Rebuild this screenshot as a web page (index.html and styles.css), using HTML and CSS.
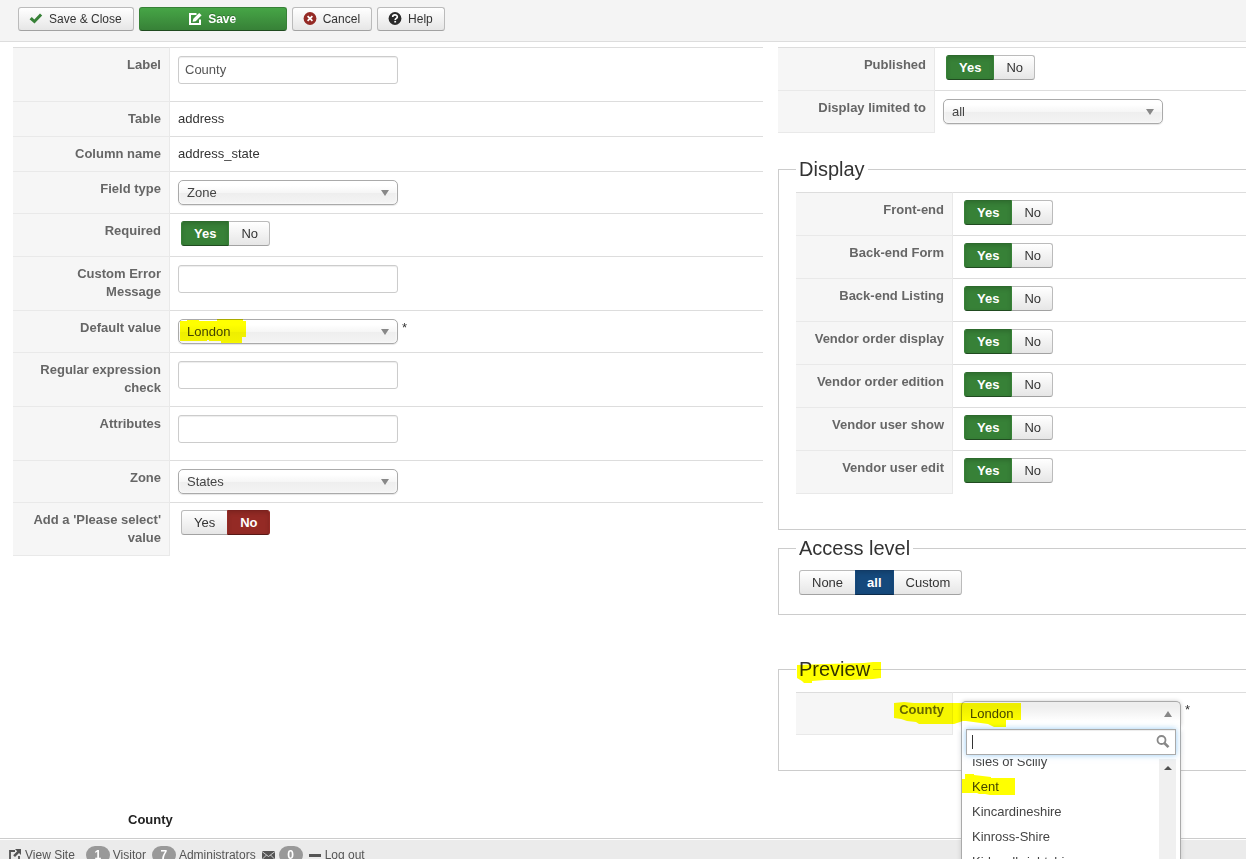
FILE: index.html
```html
<!DOCTYPE html>
<html lang="en">
<head>
<meta charset="utf-8">
<title>Field: County</title>
<link rel="stylesheet" href="styles.css">
</head>
<body>
<header class="toolbar">
  <button type="button" class="btn"><svg class="icon" viewBox="0 0 14 14" width="14" height="14"><path d="M.6 7.200 2.800 5 5.300 7.400 11 1.600 13.200 3.600 5.500 11.600z" fill="#378137"/></svg>Save &amp; Close</button>
  <button type="button" class="btn btn-save"><svg class="icon" viewBox="0 0 14 14" width="14" height="14"><path d="M8.500 2H2v10h10V7.500" fill="none" stroke="#fff" stroke-width="2"/><path d="M4.600 9.800 5.300 6.800 11.200 .9 13.600 3.300 7.700 9.200z" fill="#fff"/></svg>Save</button>
  <button type="button" class="btn"><svg class="icon" viewBox="0 0 14 14" width="14" height="14"><circle cx="7" cy="6.500" r="6.400" fill="#942a25"/><path d="M4.600 4.100l4.800 4.800M9.400 4.100l-4.800 4.800" stroke="#fff" stroke-width="1.700"/></svg>Cancel</button>
  <button type="button" class="btn"><svg class="icon" viewBox="0 0 14 14" width="14" height="14"><circle cx="7" cy="6.500" r="6.400" fill="#2b2b2b"/><path d="M4.700 5C4.700 2.200 9.300 2.200 9.300 4.900 9.300 6.500 7.200 6.200 7.200 8" fill="none" stroke="#fff" stroke-width="1.700"/><path d="M6.300 8.900h1.800v1.600H6.300z" fill="#fff"/></svg>Help</button>
</header>

<main class="columns">
  <section>
    <table class="form-table">
      <tr><th><label for="label">Label</label></th><td><input class="text" id="label" type="text" value="County"></td></tr>
      <tr><th>Table</th><td>address</td></tr>
      <tr><th>Column name</th><td>address_state</td></tr>
      <tr><th><label for="type">Field type</label></th><td><div class="pick"><select id="type"><option>Zone</option></select></div></td></tr>
      <tr><th id="t-req">Required</th><td class="switch"><div class="group" role="radiogroup" aria-labelledby="t-req"><label class="yes"><input type="radio" name="req" checked>Yes</label><label class="no"><input type="radio" name="req">No</label></div></td></tr>
      <tr><th><label for="err">Custom Error Message</label></th><td><input class="text" id="err" type="text"></td></tr>
      <tr><th><label for="def">Default value</label></th><td><div class="line"><div class="pick"><select id="def"><option>London</option></select><svg class="marker mark-default" viewBox="0 0 70 25" width="70" height="25"><path d="M2 2h7V1h12v1h18V0h26v2h3v16h-4v6H43v-2H31v-1h-2v1H2z"/></svg></div><span class="star">*</span></div></td></tr>
      <tr><th><label for="regex">Regular expression check</label></th><td><input class="text" id="regex" type="text"></td></tr>
      <tr><th><label for="attr">Attributes</label></th><td><input class="text" id="attr" type="text"></td></tr>
      <tr><th><label for="zone">Zone</label></th><td><div class="pick"><select id="zone"><option>States</option></select></div></td></tr>
      <tr><th id="t-add">Add a 'Please select' value</th><td class="switch"><div class="group" role="radiogroup" aria-labelledby="t-add"><label class="yes"><input type="radio" name="add">Yes</label><label class="no"><input type="radio" name="add" checked>No</label></div></td></tr>
    </table>
  </section>

  <section>
    <table class="form-table">
      <tr><th id="t-pub">Published</th><td class="switch"><div class="group" role="radiogroup" aria-labelledby="t-pub"><label class="yes"><input type="radio" name="pub" checked>Yes</label><label class="no"><input type="radio" name="pub">No</label></div></td></tr>
      <tr><th><label for="limit">Display limited to</label></th><td><div class="pick"><select id="limit"><option>all</option></select></div></td></tr>
    </table>

    <fieldset class="box box-display">
      <legend>Display</legend>
      <table class="form-table">
        <tr><th id="t-d1">Front-end</th><td class="switch"><div class="group" role="radiogroup" aria-labelledby="t-d1"><label class="yes"><input type="radio" name="d1" checked>Yes</label><label class="no"><input type="radio" name="d1">No</label></div></td></tr>
        <tr><th id="t-d2">Back-end Form</th><td class="switch"><div class="group" role="radiogroup" aria-labelledby="t-d2"><label class="yes"><input type="radio" name="d2" checked>Yes</label><label class="no"><input type="radio" name="d2">No</label></div></td></tr>
        <tr><th id="t-d3">Back-end Listing</th><td class="switch"><div class="group" role="radiogroup" aria-labelledby="t-d3"><label class="yes"><input type="radio" name="d3" checked>Yes</label><label class="no"><input type="radio" name="d3">No</label></div></td></tr>
        <tr><th id="t-d4">Vendor order display</th><td class="switch"><div class="group" role="radiogroup" aria-labelledby="t-d4"><label class="yes"><input type="radio" name="d4" checked>Yes</label><label class="no"><input type="radio" name="d4">No</label></div></td></tr>
        <tr><th id="t-d5">Vendor order edition</th><td class="switch"><div class="group" role="radiogroup" aria-labelledby="t-d5"><label class="yes"><input type="radio" name="d5" checked>Yes</label><label class="no"><input type="radio" name="d5">No</label></div></td></tr>
        <tr><th id="t-d6">Vendor user show</th><td class="switch"><div class="group" role="radiogroup" aria-labelledby="t-d6"><label class="yes"><input type="radio" name="d6" checked>Yes</label><label class="no"><input type="radio" name="d6">No</label></div></td></tr>
        <tr><th id="t-d7">Vendor user edit</th><td class="switch"><div class="group" role="radiogroup" aria-labelledby="t-d7"><label class="yes"><input type="radio" name="d7" checked>Yes</label><label class="no"><input type="radio" name="d7">No</label></div></td></tr>
      </table>
    </fieldset>

    <fieldset class="box box-access">
      <legend>Access level</legend>
      <div class="group"><label><input type="radio" name="access">None</label><label class="all"><input type="radio" name="access" checked>all</label><label><input type="radio" name="access">Custom</label></div>
    </fieldset>

    <fieldset class="box box-preview">
      <legend>Preview<svg class="marker mark-legend" viewBox="0 0 86 24" width="86" height="24"><path d="M1 3l29-1 38-1 9-1h8v16l-8 1-22 1H29l-13 1v2H8l-2-2-5-3z"/></svg></legend>
      <table class="form-table">
        <tr>
          <th><label for="search">County</label></th>
          <td>
            <div class="line">
              <div class="combo">
                <button type="button" class="combo-value" aria-expanded="true">London</button>
                <div class="combo-menu">
                  <div class="search">
                    <input id="search" type="text">
                    <span class="caret"></span>
                    <svg class="glass" viewBox="0 0 14 14" width="14" height="14"><circle cx="5.500" cy="5" r="4" fill="none" stroke="#888" stroke-width="1.800"/><path d="M8.300 8l4.200 4.200" stroke="#888" stroke-width="2.600"/></svg>
                  </div>
                  <div class="results">
                    <ul>
                      <li>Isles of Scilly</li>
                      <li>Kent</li>
                      <li>Kincardineshire</li>
                      <li>Kinross-Shire</li>
                      <li>Kirkcudbrightshire</li>
                    </ul>
                    <div class="scroll"></div>
                  </div>
                </div>
                <svg class="marker mark-county" viewBox="0 0 130 28" width="130" height="28"><path d="M1 1l10-1 10 1h107v17h-15v7h-12l-6-3-22-3H70l-3 1-6 2H26l-3-2-9-1-6-2-7-1z"/></svg>
                <svg class="marker mark-kent" viewBox="0 0 54 24" width="54" height="24"><path d="M3 0h9v1l17 2v1h24v17H28l-5-1H17l-2-1H0V5h3z"/></svg>
              </div>
              <span class="star">*</span>
            </div>
          </td>
        </tr>
      </table>
    </fieldset>
  </section>
</main>

<p class="field-name">County</p>

<footer class="status">
  <a href="#"><svg class="out" viewBox="0 0 12 12" width="12" height="12"><path d="M6 2H1v9h9V7" fill="none" stroke="#555" stroke-width="1.800"/><path d="M6 0h6v6L10 4 6 8 4.200 6.200 8.200 2.200z" fill="#555"/></svg>View Site</a>
  <span class="count"><b>1</b>Visitor</span>
  <span class="count"><b>7</b>Administrators</span>
  <span class="mail"><svg viewBox="0 0 13 9" width="13" height="9"><path d="M0 0h13v9H0z" fill="#555"/><path d="M0 .5l6.500 5L13 .5M0 8.500l4.500-4.500M13 8.500L8.500 4" fill="none" stroke="#ebebeb" stroke-width=".8"/></svg><b>0</b></span>
  <a href="#"><svg viewBox="0 0 12 3" width="12" height="3"><path d="M0 0h12v3H0z" fill="#555"/></svg>Log out</a>
</footer>
</body>
</html>
```
FILE: styles.css
```css
* { box-sizing: border-box; }

body {
  margin: 0;
  overflow: hidden;
  background: #fff;
  color: #333;
  font: 13px/18px "Liberation Sans", Arial, sans-serif;
}

button, input, select { font: inherit; }

/* Toolbar */
.toolbar {
  display: flex;
  gap: 5px;
  padding: 7px 18px 10px;
  border-bottom: 1px solid #ddd;
  background: #f4f4f4;
}

.btn {
  display: flex;
  align-items: center;
  justify-content: center;
  gap: 6px;
  height: 24px;
  padding: 0 11px 0 10px;
  border: 1px solid #bbb;
  border-bottom-color: #a2a2a2;
  border-radius: 3px;
  background: linear-gradient(#fff, #e6e6e6);
  color: #333;
  font-size: 12px;
}

.btn-save {
  width: 148px;
  border-color: #378137 #378137 #204b20;
  background: linear-gradient(#46a546, #378137);
  color: #fff;
  font-weight: bold;
  text-shadow: 0 -1px 0 rgba(0, 0, 0, .25);
}

/* Two columns */
.columns {
  display: grid;
  grid-template-columns: minmax(0, 125fr) minmax(0, 78fr);
  gap: 15px;
  padding: 5px 0 0 13px;
}

.form-table {
  width: 100%;
  border-spacing: 0;
  table-layout: fixed;
}

.form-table th,
.form-table td {
  padding: 8px;
  border-top: 1px solid #ddd;
  vertical-align: top;
  text-align: left;
}

.form-table th {
  width: 157px;
  border-top-color: #e9e9e9;
  border-right: 1px solid #e9e9e9;
  background: #f6f6f6;
  color: #666;
  text-align: right;
}

.form-table td.switch { padding: 7px 8px 10px 11px; }
.form-table tr:first-child th { border-top-color: #ddd; }
.form-table tr:last-child th { border-bottom: 1px solid #e9e9e9; }
.form-table tr:last-child td { border-bottom: 1px solid transparent; }

/* Controls */
.text {
  display: block;
  width: 220px;
  height: 28px;
  margin-bottom: 9px;
  padding: 3px 6px 5px;
  border: 1px solid #ccc;
  border-radius: 3px;
  background: #fff;
  box-shadow: inset 0 1px 1px rgba(0, 0, 0, .075);
  color: #555;
}

.line { display: flex; gap: 4px; }
.star { height: 18px; }

.pick {
  position: relative;
  width: 220px;
  height: 25px;
}

.pick select {
  display: block;
  width: 100%;
  height: 25px;
  padding: 0 8px;
  border: 1px solid #aaa;
  border-radius: 5px;
  appearance: none;
  background: linear-gradient(#fff 20%, #f6f6f6 50%, #eee 52%, #f4f4f4);
  box-shadow: inset 0 0 3px #fff, 0 1px 1px rgba(0, 0, 0, .1);
  color: #444;
}

.pick::after {
  content: "";
  position: absolute;
  top: 10px;
  right: 9px;
  border: solid transparent;
  border-width: 6px 4px 0;
  border-top-color: #888;
}

.group { display: flex; }

.group label {
  position: relative;
  height: 25px;
  margin-left: -1px;
  padding: 0 12px;
  border: 1px solid #bbb;
  border-bottom-color: #a2a2a2;
  background: linear-gradient(#fff, #e6e6e6);
  line-height: 23px;
}

.group label:first-child { margin-left: 0; border-radius: 3px 0 0 3px; }
.group label:last-child { padding-right: 11px; border-radius: 0 3px 3px 0; }
.group label.all { padding: 0 11px; }

.group input {
  position: absolute;
  inset: 0;
  margin: 0;
  opacity: 0;
}

.group label:has(:checked) {
  z-index: 1;
  box-shadow: inset 0 2px 4px rgba(0, 0, 0, .15);
  color: #fff;
  font-weight: bold;
}

.group .yes:has(:checked) { border-color: #2d6a2d #378137 #204b20; background: #378137; }
.group .no:has(:checked) { border-color: #7b211e #942a25 #571815; background: #942a25; }
.group .all:has(:checked) { border-color: #123a66 #15497c #0c2a48; background: #15497c; }

/* Boxes */
.box {
  min-width: 0;
  margin: 0;
  padding: 13px 0 35px 17px;
  border: 1px solid #ccc;
  border-right: 0;
}

.box legend {
  position: relative;
  padding: 0 3px;
  font-size: 20px;
  line-height: 20px;
}

.box-display { margin-top: 26px; }
.box-access { margin-top: 8px; padding: 12px 0 19px 20px; }
.box-access legend { margin-left: -3px; }
.box-preview { margin-top: 44px; }

/* Open drop-down */
.combo {
  position: relative;
  width: 220px;
  height: 25px;
}

.combo-value {
  display: block;
  position: relative;
  width: 100%;
  height: 25px;
  padding: 0 8px;
  border: 1px solid #aaa;
  border-bottom: 0;
  border-radius: 5px 5px 0 0;
  background: linear-gradient(#eee 20%, #fff 80%);
  box-shadow: 0 0 4px rgba(0, 0, 0, .2);
  color: #444;
  text-align: left;
}

.combo-value::after {
  content: "";
  position: absolute;
  top: 9px;
  right: 8px;
  border: solid transparent;
  border-width: 0 4px 6px;
  border-bottom-color: #888;
}

.combo-menu {
  position: absolute;
  top: 25px;
  left: 0;
  width: 220px;
  padding: 3px 4px 4px;
  border: 1px solid #aaa;
  border-top: 0;
  background: #fff;
  box-shadow: 0 4px 5px rgba(0, 0, 0, .15);
}

.search { position: relative; }

.search input {
  display: block;
  width: 100%;
  height: 26px;
  padding: 4px 20px 4px 5px;
  border: 1px solid #aaa;
  outline: 0;
  box-shadow: 0 0 6px rgba(82, 168, 236, .6), inset 0 1px 1px rgba(0, 0, 0, .075);
}

.caret {
  position: absolute;
  top: 6px;
  left: 6px;
  width: 1px;
  height: 14px;
  background: #333;
}

.glass {
  position: absolute;
  top: 6px;
  right: 6px;
}

.results {
  display: flex;
  height: 140px;
  margin-top: 4px;
  overflow: hidden;
}

.results ul {
  flex: 1;
  margin: -10px 0 0;
  padding: 0;
  list-style: none;
  color: #444;
}

.results li { padding: 5px 6px; line-height: 15px; }

.scroll {
  width: 17px;
  padding: 7px 5px;
  background: #f0f0f0;
}

.scroll::before {
  content: "";
  display: block;
  border: solid transparent;
  border-width: 0 4px 4px;
  border-bottom-color: #505050;
}

/* Highlighter strokes */
.marker {
  position: absolute;
  fill: #ff0;
  mix-blend-mode: multiply;
  pointer-events: none;
}

.mark-default { top: 0; left: 0; }
.mark-legend { top: 3px; left: 0; }
.mark-county { top: 1px; left: -68px; }
.mark-kent { top: 73px; left: 1px; }

/* Page end */
.field-name {
  margin: 40px 0 9px 128px;
  color: #222;
  font-weight: bold;
}

.status {
  display: flex;
  align-items: center;
  padding: 7px 9px;
  border-top: 1px solid #ccc;
  background: #ebebeb;
  box-shadow: inset 0 1px 0 #fff;
  color: #555;
  font-size: 12px;
}

.status a,
.status span {
  display: flex;
  align-items: center;
  gap: 4px;
  margin-right: 6px;
  color: inherit;
  text-decoration: none;
}

.status a:first-child { margin-right: 11px; }
.status .count { gap: 3px; }

.status b {
  width: 24px;
  border-radius: 9px;
  background: #999;
  color: #fff;
  text-align: center;
}
```
